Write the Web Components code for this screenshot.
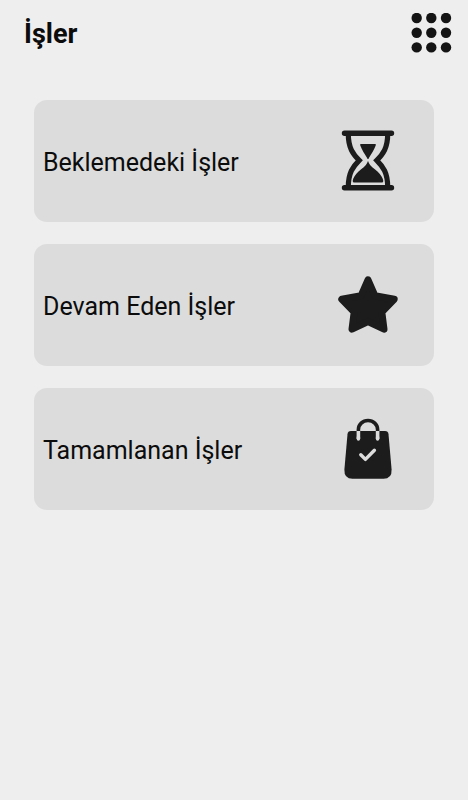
<!DOCTYPE html>
<html lang="tr">
<head>
<meta charset="utf-8">
<meta name="viewport" content="width=device-width, initial-scale=1">
<title>İşler</title>
<style>
  body { margin: 0; background: #eeeeee; color: #0c0c0c; font-family: Roboto, "Liberation Sans", sans-serif; }
</style>
</head>
<body>
<jobs-page></jobs-page>
<script>
const ICONS = {
  hourglass: `
    <g transform="translate(0 -1)">
    <path d="M8.5 5.3H55.5M8.5 59.7H55.5" fill="none" stroke="currentColor" stroke-width="5.4" stroke-linecap="round"/>
    <path d="M12.3 6C12.3 20 17 26 23.2 32.3C17 38.5 12.3 45 12.3 59M51.7 6C51.7 20 47 26 40.8 32.3C47 38.5 51.7 45 51.7 59" fill="none" stroke="currentColor" stroke-width="5.2"/>
    <path d="M25 16H39Q40.4 16 39.7 17.4C38 22 35.5 25.5 32.6 30.5V34.5C34 38 38 40.5 41.5 43.5C45 47 47 50 47.3 53Q47.3 54.5 45.8 54.5H18.2Q16.7 54.5 16.7 53C17 50 19 47 22.5 43.5C26 40.5 30 38 31.4 34.5V30.5C28.5 25.5 26 22 24.3 17.4Q23.6 16 25 16Z" fill="currentColor"/>
    <path d="M29.8 32.3H34.2" stroke="var(--card, #dcdcdc)" stroke-width="2.6"/>
    </g>`,
  star: `
    <path d="M32 6.8L39 22.8L58.2 26.2L45.8 39L48 56.2L32 48.7L16 56.2L18.2 39L5.8 26.2L25 22.8Z" fill="currentColor" stroke="currentColor" stroke-width="7" stroke-linejoin="round"/>`,
  bag: `
    <path d="M15 14H49Q52.2 14 52.5 17.2L55.6 52.5Q56 61.8 47.5 61.8H16.5Q8 61.8 8.4 52.5L11.5 17.2Q11.8 14 15 14Z" fill="currentColor"/>
    <path d="M22.4 14V12.5A9.6 9 0 0 1 41.6 12.5V14" fill="none" stroke="currentColor" stroke-width="3.6"/>
    <path d="M22.4 14V22M41.6 14V22" stroke="var(--card, #dcdcdc)" stroke-width="3.6"/>
    <path d="M22.4 20V22M41.6 20V22M24.8 37.8L29.4 42.4L38.4 33.2" fill="none" stroke="var(--card, #dcdcdc)" stroke-width="3.4" stroke-linecap="round" stroke-linejoin="round"/>`
};

class JobIcon extends HTMLElement {
  connectedCallback() {
    this.attachShadow({ mode: "open" }).innerHTML = `
      <style>
        :host { display: block; flex: none; color: #1c1c1c; }
        svg { display: block; width: 64px; height: 64px; }
      </style>
      <svg viewBox="0 0 64 64" aria-hidden="true">${ICONS[this.getAttribute("name")]}</svg>`;
  }
}

class JobCard extends HTMLElement {
  connectedCallback() {
    this.attachShadow({ mode: "open" }).innerHTML = `
      <style>
        :host { display: block; --card: #dcdcdc; }
        button {
          display: flex; align-items: center; justify-content: space-between;
          box-sizing: border-box; width: 100%; min-height: 122px;
          margin: 0; padding: 16px 34px 16px 9px;
          border: 0; border-radius: 13px; background: var(--card);
          color: inherit; font: 400 25px/32px Roboto, "Liberation Sans", sans-serif;
          text-align: left; cursor: pointer;
        }
        span { padding-top: 3px; }
      </style>
      <button type="button"><span><slot></slot></span><job-icon name="${this.getAttribute("icon")}"></job-icon></button>`;
  }
}

class AppHeader extends HTMLElement {
  connectedCallback() {
    this.attachShadow({ mode: "open" }).innerHTML = `
      <style>
        :host { display: flex; align-items: flex-start; justify-content: space-between; padding: 13px 16px 0 24px; }
        h1 { margin: 0; font-size: 27px; line-height: 42px; font-weight: 700; }
        button { flex: none; display: block; margin: 0; padding: 0; border: 0; background: none; color: #141414; cursor: pointer; }
        svg { display: block; width: 41px; height: 40px; }
      </style>
      <h1><slot></slot></h1>
      <button type="button" aria-label="Menü">
        <svg viewBox="0 0 41 40" fill="currentColor" aria-hidden="true">
          ${[5, 19.7, 34.4].map(y => [5.7, 20.3, 35].map(x => `<circle cx="${x}" cy="${y}" r="5.2"/>`).join("")).join("")}
        </svg>
      </button>`;
  }
}

class JobsPage extends HTMLElement {
  connectedCallback() {
    this.attachShadow({ mode: "open" }).innerHTML = `
      <style>
        :host { display: block; }
        main { display: flex; flex-direction: column; gap: 22px; padding: 45px 34px; }
      </style>
      <app-header>İşler</app-header>
      <main>
        <job-card icon="hourglass">Beklemedeki İşler</job-card>
        <job-card icon="star">Devam Eden İşler</job-card>
        <job-card icon="bag">Tamamlanan İşler</job-card>
      </main>`;
  }
}

customElements.define("job-icon", JobIcon);
customElements.define("job-card", JobCard);
customElements.define("app-header", AppHeader);
customElements.define("jobs-page", JobsPage);
</script>
</body>
</html>
